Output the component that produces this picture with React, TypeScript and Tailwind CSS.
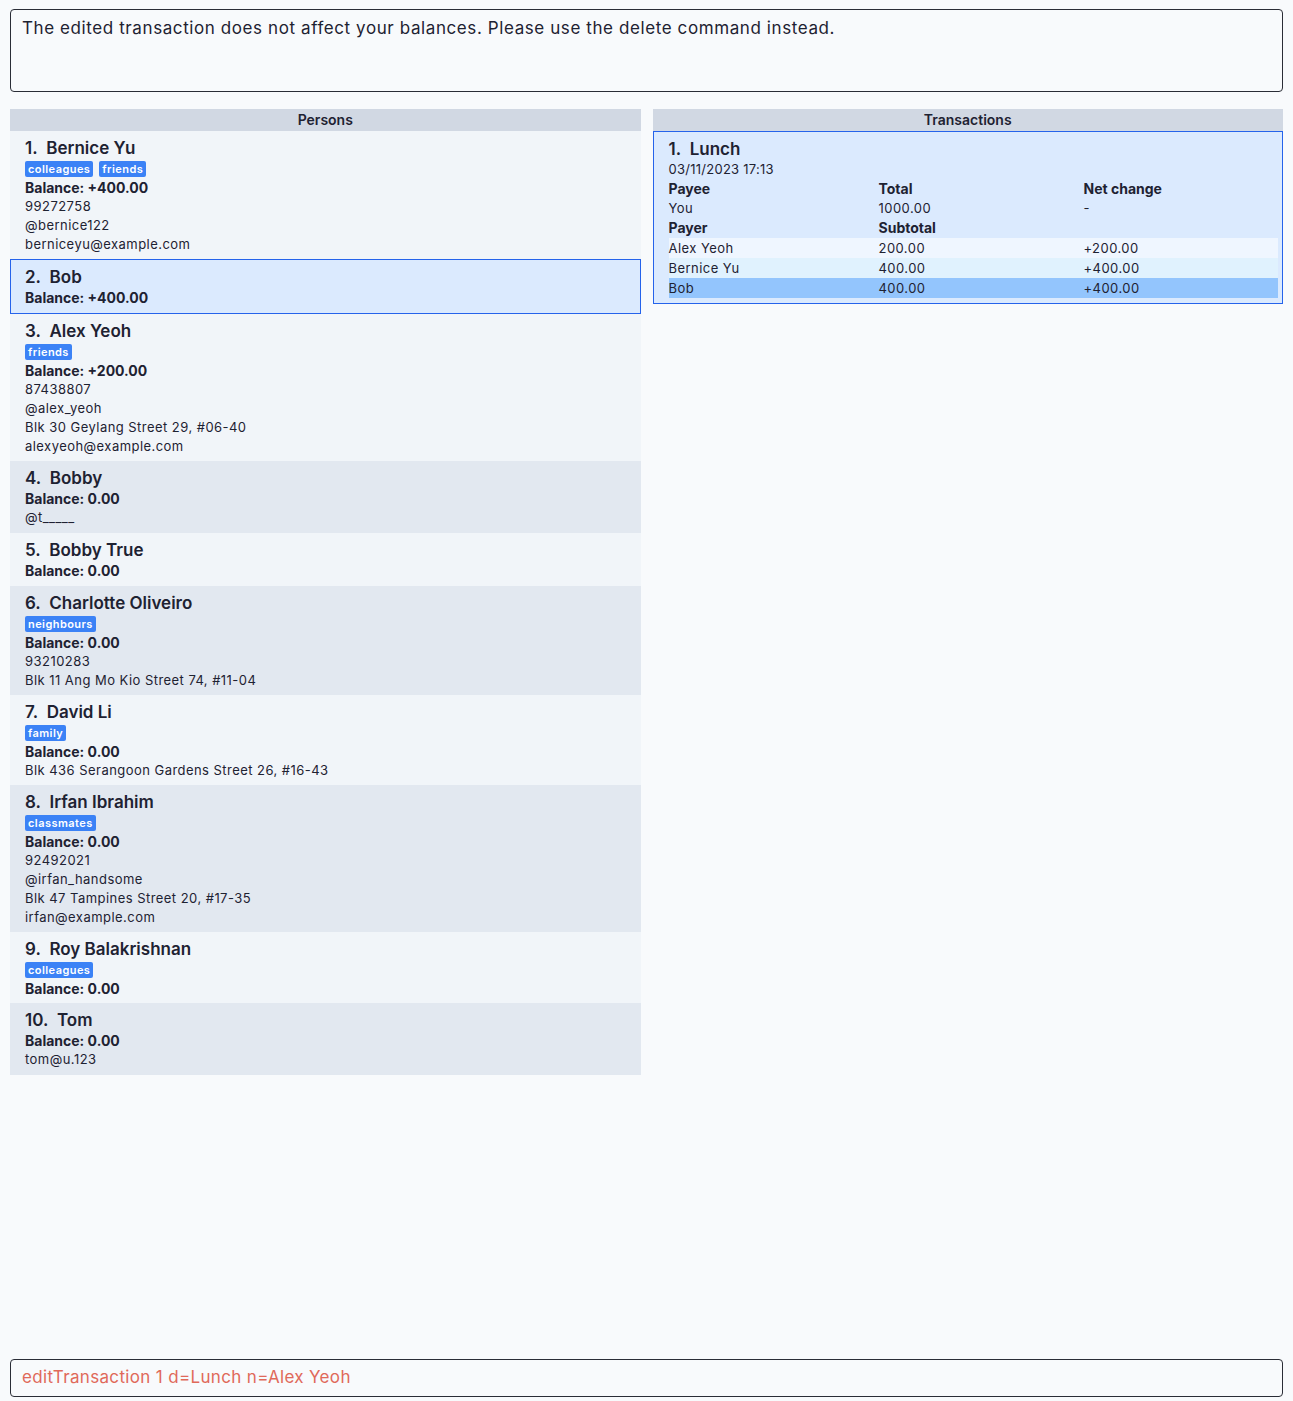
import React from 'react';

type Person = {
  name: string;
  tags?: string[];
  balance: string;
  lines: string[];
};

const persons: Person[] = [
  { name: 'Bernice Yu', tags: ['colleagues', 'friends'], balance: '+400.00', lines: ['99272758', '@bernice122', 'berniceyu@example.com'] },
  { name: 'Bob', balance: '+400.00', lines: [] },
  { name: 'Alex Yeoh', tags: ['friends'], balance: '+200.00', lines: ['87438807', '@alex_yeoh', 'Blk 30 Geylang Street 29, #06-40', 'alexyeoh@example.com'] },
  { name: 'Bobby', balance: '0.00', lines: ['@t_____'] },
  { name: 'Bobby True', balance: '0.00', lines: [] },
  { name: 'Charlotte Oliveiro', tags: ['neighbours'], balance: '0.00', lines: ['93210283', 'Blk 11 Ang Mo Kio Street 74, #11-04'] },
  { name: 'David Li', tags: ['family'], balance: '0.00', lines: ['Blk 436 Serangoon Gardens Street 26, #16-43'] },
  { name: 'Irfan Ibrahim', tags: ['classmates'], balance: '0.00', lines: ['92492021', '@irfan_handsome', 'Blk 47 Tampines Street 20, #17-35', 'irfan@example.com'] },
  { name: 'Roy Balakrishnan', tags: ['colleagues'], balance: '0.00', lines: [] },
  { name: 'Tom', balance: '0.00', lines: ['tom@u.123'] },
];

const payers = [
  { name: 'Alex Yeoh', subtotal: '200.00', net: '+200.00', cls: 'bg-[#eff6ff]' },
  { name: 'Bernice Yu', subtotal: '400.00', net: '+400.00', cls: 'bg-[#e0f2fe]' },
  { name: 'Bob', subtotal: '400.00', net: '+400.00', cls: 'bg-[#93c5fd]' },
];

function PersonCard({ p, idx }: { p: Person; idx: number }) {
  const selected = idx === 1;
  const bg = selected
    ? 'bg-[#dbeafe] border border-[#2563eb] pt-[6px] pb-[6px]'
    : idx % 2 === 0
      ? 'bg-[#f1f5f9] border border-transparent pt-[5px]'
      : 'bg-[#e2e8f0] border border-transparent pt-[5px]';
  const pb = selected ? '' : p.tags ? 'pb-[4px]' : 'pb-[5px]';
  return (
    <div className={`${bg} ${pb} px-[14px]`}>
      <div className="text-[17px] leading-[22px] font-semibold text-[#1e2232]">
        {idx + 1}.&nbsp;&nbsp;{p.name}
      </div>
      {p.tags && (
        <div className="flex gap-[6px] h-[19px] items-center">
          {p.tags.map((t) => (
            <span key={t} className="bg-[#3b82f6] text-white text-[11px] leading-[16px] font-semibold tracking-[0.04em] px-[3px] rounded-[2px]">
              {t}
            </span>
          ))}
        </div>
      )}
      <div className="text-[14px] leading-[19px] font-bold text-[#1e2232]">Balance: {p.balance}</div>
      {p.lines.map((l) => (
        <div key={l} className="text-[13px] leading-[19px] tracking-[0.035em] text-[#1e2232]">{l}</div>
      ))}
    </div>
  );
}

export default function App() {
  return (
    <div className="min-h-screen h-[1401px] bg-[#f8fafc] px-[10px] flex flex-col text-[#1e2232]" style={{ fontFamily: 'Inter, "Open Sans", sans-serif' }}>
      {/* result display */}
      <div className="mt-[9px] h-[83px] border border-[#2a2d36] rounded-[4px] px-[11px] pt-[6px] text-[17px] leading-[24px] tracking-[0.035em]">
        The edited transaction does not affect your balances. Please use the delete command instead.
      </div>

      <div className="grid grid-cols-2 gap-[12px] mt-[17px] flex-1 items-start">
        {/* persons */}
        <div>
          <div className="bg-[#d1d8e3] h-[22px] text-center text-[14px] leading-[22px] font-semibold">Persons</div>
          {persons.map((p, i) => (
            <PersonCard key={p.name} p={p} idx={i} />
          ))}
        </div>

        {/* transactions */}
        <div>
          <div className="bg-[#d1d8e3] h-[22px] text-center text-[14px] leading-[22px] font-semibold">Transactions</div>
          <div className="bg-[#dbeafe] border border-[#2563eb] pl-[15px] pr-[4px] pt-[6px] pb-[5px]">
            <div className="text-[17px] leading-[22px] font-semibold">1.&nbsp;&nbsp;Lunch</div>
            <div className="text-[13px] leading-[19px] tracking-[0.02em]">03/11/2023 17:13</div>
            <div className="grid grid-cols-[210px_205px_1fr] text-[14px] leading-[20px] font-bold">
              <div>Payee</div>
              <div>Total</div>
              <div>Net change</div>
            </div>
            <div className="grid grid-cols-[210px_205px_1fr] text-[13px] leading-[19px] tracking-[0.035em]">
              <div>You</div>
              <div>1000.00</div>
              <div>-</div>
            </div>
            <div className="grid grid-cols-[210px_205px_1fr] text-[14px] leading-[20px] font-bold">
              <div>Payer</div>
              <div>Subtotal</div>
              <div></div>
            </div>
            {payers.map((r) => (
              <div key={r.name} className={`grid grid-cols-[210px_205px_1fr] text-[13px] leading-[20px] tracking-[0.035em] ${r.cls}`}>
                <div>{r.name}</div>
                <div>{r.subtotal}</div>
                <div>{r.net}</div>
              </div>
            ))}
          </div>
        </div>
      </div>

      {/* command box */}
      <div className="mb-[4px] h-[38px] border border-[#2a2d36] rounded-[4px] px-[11px] flex items-center text-[17px] tracking-[0.02em] text-[#e0695a]">
        editTransaction 1 d=Lunch n=Alex Yeoh
      </div>
    </div>
  );
}
